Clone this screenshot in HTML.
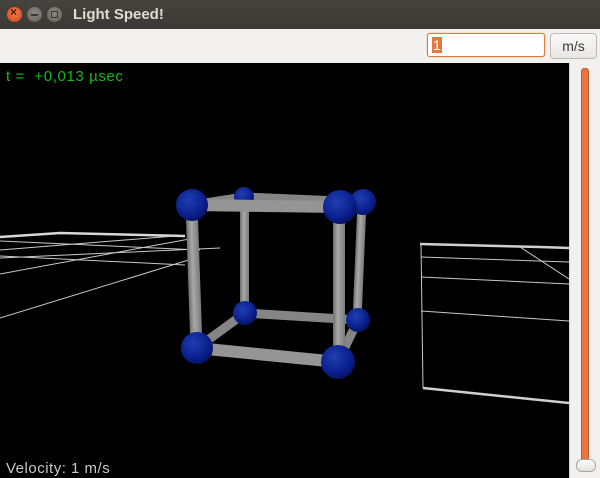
<!DOCTYPE html>
<html><head><style>
body{margin:0;width:600px;height:478px;overflow:hidden;background:#f2f1f0;font-family:"Liberation Sans","DejaVu Sans",sans-serif;position:relative}
.title{position:absolute;left:0;top:0;width:600px;height:29px;background:linear-gradient(#45443f,#3a3935)}
.title .t{position:absolute;left:73px;top:6px;color:#dfdbd2;font-weight:bold;font-size:15px}
.btn{position:absolute;top:7px;width:15px;height:15px;border-radius:50%}
.tb{position:absolute;left:0;top:29px;width:600px;height:34px;background:#f2f1f0}
.inp{position:absolute;left:427px;top:33px;width:116px;height:22px;border:1px solid #e2793f;border-radius:3px;background:#fff;box-shadow:0 0 1px #e2793f}
.inp span{position:absolute;left:4px;top:3px;background:#e2793f;color:#fff;font-size:14px;line-height:16px;padding:0 1px}
.ms{position:absolute;left:550px;top:33px;width:45px;height:24px;border:1px solid #bdbab5;border-radius:4px;background:linear-gradient(#faf9f8,#e9e7e4);font-size:14px;color:#3c3c3c;text-align:center;line-height:24px}
.canvas{position:absolute;left:0;top:63px;width:569px;height:415px;background:#000}
.side{position:absolute;left:569px;top:63px;width:31px;height:415px;background:#f2f1f0;border-left:1px solid #d8d6d2}
</style></head><body>
<div class="title">
<div class="btn" style="left:7px;background:radial-gradient(circle at 50% 40%,#f27a4e,#d8461c);"><span style="position:absolute;left:3px;top:-2px;font-size:12px;color:#4a1a0a;font-weight:bold">×</span></div>
<div class="btn" style="left:27px;background:radial-gradient(circle at 50% 40%,#8a8983,#5f5e59)"><span style="position:absolute;left:4px;top:7px;width:7px;height:2px;background:#3a3935"></span></div>
<div class="btn" style="left:47px;background:radial-gradient(circle at 50% 40%,#8a8983,#5f5e59)"><span style="position:absolute;left:4px;top:4px;width:5px;height:5px;border:1px solid #3a3935"></span></div>
<div class="t">Light Speed!</div>
</div>
<div class="tb"></div>
<div class="inp"><span>1</span></div>
<div class="ms">m/s</div>
<div class="canvas">
<svg width="569" height="415" viewBox="0 63 569 415" style="position:absolute;left:0;top:0">
<defs>
<radialGradient id="b" cx="40%" cy="35%" r="65%"><stop offset="0" stop-color="#1f3fb0"/><stop offset="0.7" stop-color="#0b2090"/><stop offset="1" stop-color="#061466"/></radialGradient>
<linearGradient id="rv" x1="0" y1="0" x2="1" y2="0"><stop offset="0" stop-color="#6e6e6e"/><stop offset="0.4" stop-color="#a8a8a8"/><stop offset="1" stop-color="#7a7a7a"/></linearGradient>
</defs>
<g stroke="#c8c8c8" fill="none">
<polyline points="0,237 60,233 185,236" stroke-width="2.5" stroke="#d8d8d8"/>
<line x1="0" y1="250" x2="175" y2="236" stroke-width="1"/>
<line x1="0" y1="258" x2="220" y2="248" stroke-width="1"/>
<line x1="0" y1="241" x2="200" y2="250" stroke-width="1"/>
<line x1="0" y1="274" x2="195" y2="238" stroke-width="1"/>
<line x1="0" y1="256" x2="185" y2="265" stroke-width="1"/>
<line x1="0" y1="318" x2="195" y2="258" stroke-width="1"/>
<polyline points="420,244 540,247 569,248" stroke-width="2.5" stroke="#d0d0d0"/>
<line x1="421" y1="244" x2="423" y2="388" stroke-width="1"/>
<line x1="423" y1="388" x2="569" y2="403" stroke-width="2.5" stroke="#d0d0d0"/>
<line x1="421" y1="257" x2="569" y2="262" stroke-width="1"/>
<line x1="421" y1="277" x2="569" y2="284" stroke-width="1"/>
<line x1="421" y1="311" x2="569" y2="321" stroke-width="1"/>
<line x1="520" y1="247" x2="569" y2="279" stroke-width="1"/>
</g>
<g stroke-linecap="butt">
<g stroke="#858585" stroke-width="9">
<line x1="244" y1="197" x2="363" y2="202"/>
<line x1="245" y1="313" x2="358" y2="320"/>
<line x1="192" y1="205" x2="244" y2="197"/>
<line x1="197" y1="348" x2="245" y2="313"/>
<line x1="338" y1="362" x2="358" y2="320"/>
</g>
<rect x="240" y="197" width="9" height="116" fill="url(#rv)"/>
<rect x="355" y="202" width="9" height="118" fill="url(#rv)" transform="rotate(2.4 360 261)"/>
<circle cx="244" cy="197" r="10" fill="url(#b)"/>
<circle cx="363" cy="202" r="13" fill="url(#b)"/>
<circle cx="245" cy="313" r="12" fill="url(#b)"/>
<circle cx="358" cy="320" r="12" fill="url(#b)"/>
<g stroke="#959595" stroke-width="12">
<line x1="192" y1="205" x2="340" y2="207"/>
<line x1="197" y1="348" x2="338" y2="362"/>
</g>
<rect x="188" y="205" width="12" height="143" fill="url(#rv)" transform="rotate(-2 194 276)"/>
<rect x="333" y="207" width="12" height="155" fill="url(#rv)"/>
<circle cx="192" cy="205" r="16" fill="url(#b)"/>
<circle cx="340" cy="207" r="17" fill="url(#b)"/>
<circle cx="197" cy="348" r="16" fill="url(#b)"/>
<circle cx="338" cy="362" r="17" fill="url(#b)"/>
</g>
<text x="6" y="81" fill="#18b818" font-size="15" letter-spacing="0.6" font-family="Liberation Sans,sans-serif" xml:space="preserve">t =  +0,013 µsec</text>
<text x="6" y="473" fill="#c8c8c8" font-size="15" letter-spacing="0.5" font-family="Liberation Sans,sans-serif">Velocity: 1 m/s</text>
</svg>
</div>
<div class="side">
<div style="position:absolute;left:11px;top:5px;width:6px;height:395px;background:#e8743f;border:1px solid #c95e2c;border-radius:3px"></div>
<div style="position:absolute;left:6px;top:396px;width:18px;height:11px;border:1px solid #a8a6a2;border-radius:6px;background:linear-gradient(#fdfdfd,#e4e2df)"></div>
</div>
</body></html>
